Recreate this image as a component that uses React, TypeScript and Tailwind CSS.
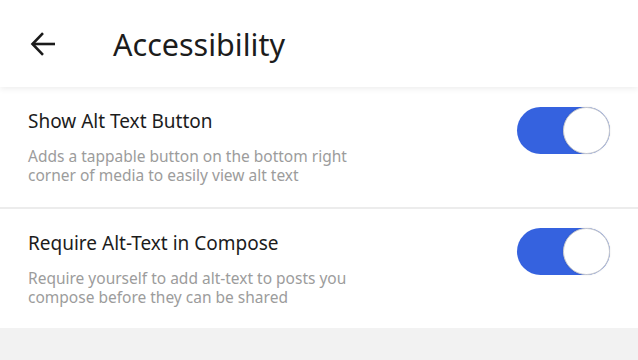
import { useState } from "react"

type Setting = {
  id: string
  title: string
  description: string[]
}

const settings: Setting[] = [
  {
    id: "alt-button",
    title: "Show Alt Text Button",
    description: ["Adds a tappable button on the bottom right", "corner of media to easily view alt text"],
  },
  {
    id: "require-alt",
    title: "Require Alt-Text in Compose",
    description: ["Require yourself to add alt-text to posts you", "compose before they can be shared"],
  },
]

function Toggle({ on, onChange }: { on: boolean; onChange: () => void }) {
  return (
    <button
      type="button"
      onClick={onChange}
      className={`relative h-[47px] w-[93px] shrink-0 rounded-full ${on ? "bg-[#3562df]" : "bg-[#c9c9c9]"}`}
    >
      <span
        className={`absolute top-0 h-[47px] w-[47px] rounded-full border border-[#cfcfcf] bg-white shadow-[0_0_2px_rgba(0,0,0,0.12)] ${
          on ? "right-0" : "left-0"
        }`}
      />
    </button>
  )
}

export default function App() {
  const [values, setValues] = useState<Record<string, boolean>>({ "alt-button": true, "require-alt": true })

  return (
    <div className="flex h-[360px] w-[638px] flex-col overflow-hidden bg-[#f2f2f2] font-['Noto_Sans',sans-serif]">
      {/* header */}
      <div className="relative z-10 flex h-[87px] shrink-0 items-center bg-white shadow-[0_2px_6px_rgba(0,0,0,0.07)]">
        <button type="button" className="ml-[30px] flex h-[26px] w-[26px] items-center justify-center">
          <svg width="26" height="26" viewBox="0 0 26 26" fill="none" stroke="#1b1b1b" strokeWidth="2.6" strokeLinecap="butt" strokeLinejoin="miter">
            <path d="M25 13H2.5" />
            <path d="M13 2.2 2.5 13 13 23.8" />
          </svg>
        </button>
        <h1 className="ml-[57px] text-[30.5px] leading-[40px] font-normal text-[#1c1c1c]">Accessibility</h1>
      </div>

      {/* settings */}
      {settings.map((s, i) => (
        <div key={s.id}>
          {i > 0 && <div className="h-[2px] bg-[#ececec]" />}
          <div className={`flex items-start justify-between bg-white pl-[28px] pr-[28px] ${i === 0 ? "h-[120px]" : "h-[119px]"}`}>
            <div className="pt-[21px]">
              <p className="text-[19px] leading-[26px] text-[#1c1c1c]">{s.title}</p>
              <div className="mt-[13px] text-[15.5px] leading-[19px] text-[#9c9c9c]">
                {s.description.map((line) => (
                  <p key={line}>{line}</p>
                ))}
              </div>
            </div>
            <div className={i === 0 ? "mt-[20px]" : "mt-[19px]"}>
              <Toggle on={values[s.id]} onChange={() => setValues((v) => ({ ...v, [s.id]: !v[s.id] }))} />
            </div>
          </div>
        </div>
      ))}
    </div>
  )
}
